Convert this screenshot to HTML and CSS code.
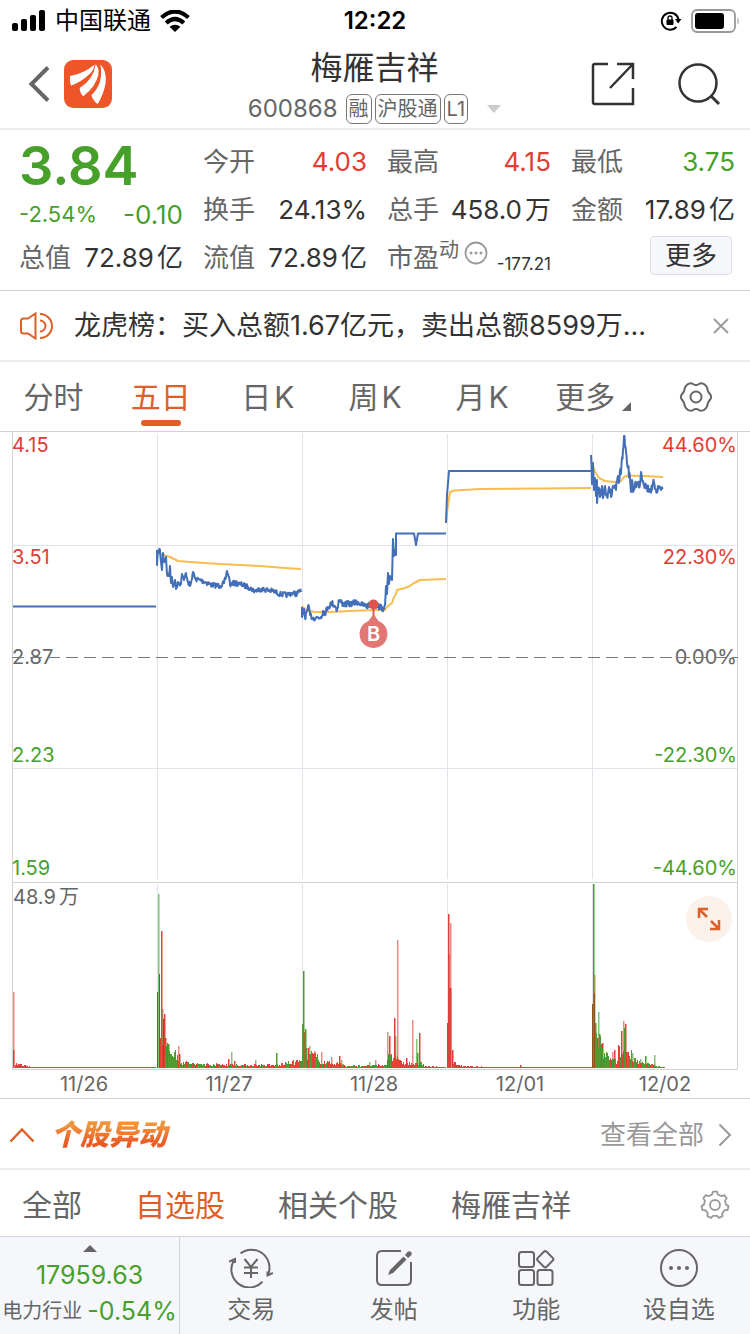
FILE: index.html
```html
<!DOCTYPE html>
<html lang="zh-CN">
<head>
<meta charset="utf-8">
<meta name="viewport" content="width=device-width, initial-scale=1">
<title>梅雁吉祥 600868</title>
<link rel="stylesheet" href="styles.css">
</head>
<body>
<div class="status">
  <div class="status-side">
    <svg class="signal" viewBox="0 0 34 22" aria-hidden="true"><rect x="0" y="13" width="6" height="8" rx="2"/><rect x="9" y="9" width="6" height="12" rx="2"/><rect x="18" y="5" width="6" height="16" rx="2"/><rect x="27" y="0" width="6" height="21" rx="2"/></svg>
    <span class="carrier">中国联通</span>
    <svg class="wifi" viewBox="0 0 30 22" aria-hidden="true"><path d="M1.500 7.500Q15-4.500 28.500 7.500M6.200 13Q15 5 23.800 13" fill="none" stroke="#000" stroke-width="4.200"/><path d="M9.500 16.800Q15 12.500 20.500 16.800L15 22z"/></svg>
  </div>
  <span class="time">12:22</span>
  <div class="status-side status-end">
    <svg class="rotation" viewBox="0 0 22 22" aria-hidden="true"><path d="M16.500 17A8.500 8.500 0 1 1 18.500 9" fill="none" stroke="#000" stroke-width="2"/><path d="M15 9h6.500L18.200 13.500z"/><rect x="6.500" y="9.500" width="7" height="5.500" rx="1"/><path d="M8 10V8a2 2 0 0 1 4 0v2" fill="none" stroke="#000" stroke-width="1.300"/></svg>
    <svg class="battery" viewBox="0 0 50 24" aria-hidden="true"><rect x="1" y="1" width="43" height="22" rx="5" fill="none" stroke="#999" stroke-width="1.800"/><rect x="4" y="4" width="29" height="16" rx="3"/><path d="M46.500 8q2.500 4 0 8z" fill="#999"/></svg>
  </div>
</div>

<header class="top">
  <div class="top-left">
    <button class="icon-btn" aria-label="返回"><svg class="back" viewBox="0 0 22 38"><path d="M20 2.500L3.500 19 20 35.500" fill="none" stroke="#666" stroke-width="4"/></svg></button>
    <svg class="logo" viewBox="0 0 144 144" aria-hidden="true"><rect width="144" height="144" rx="28" fill="#ee5529"/><g fill="#fff"><path d="M18 48Q60 40 91 14Q90 32 74 44Q54 64 21 77Q16 62 18 48z"/><path d="M95 13Q106 24 103 44Q96 78 58 109Q48 100 47 84Q88 60 95 13z"/><path d="M109 13Q129 34 125 68Q120 100 101 132Q88 124 82 106Q120 70 109 13z"/></g></svg>
  </div>
  <div class="title">
    <h1>梅雁吉祥</h1>
    <div class="subtitle"><span class="code">600868</span><span class="tag">融</span><span class="tag">沪股通</span><span class="tag">L1</span><svg class="drop" viewBox="0 0 14 8" aria-hidden="true"><path d="M0 0h14L7 8z" fill="#ccc"/></svg></div>
  </div>
  <div class="top-right">
    <button class="icon-btn" aria-label="分享"><svg class="share" viewBox="0 0 44 44"><path d="M17 2H4Q2 2 2 4V40Q2 42 4 42H42V26M26 2H42V17M42 2L19 26" fill="none" stroke="#333" stroke-width="2.500"/></svg></button>
    <button class="icon-btn" aria-label="搜索"><svg class="search" viewBox="0 0 44 44"><circle cx="21" cy="21" r="18.500" fill="none" stroke="#333" stroke-width="2.500"/><path d="M34 34l8 8" stroke="#333" stroke-width="3"/></svg></button>
  </div>
</header>

<section class="quote">
  <div class="price">
    <strong>3.84</strong>
    <div class="change"><span class="pct">-2.54%</span><span>-0.10</span></div>
  </div>
  <div class="cell"><span class="k">今开</span><span class="up">4.03</span></div>
  <div class="cell"><span class="k">最高</span><span class="up">4.15</span></div>
  <div class="cell"><span class="k">最低</span><span class="down">3.75</span></div>
  <div class="cell"><span class="k">换手</span><span>24.13%</span></div>
  <div class="cell"><span class="k">总手</span><span>458.0<span class="unit">万</span></span></div>
  <div class="cell"><span class="k">金额</span><span>17.89<span class="unit">亿</span></span></div>
  <div class="cell"><span class="k">总值</span><span>72.89<span class="unit">亿</span></span></div>
  <div class="cell"><span class="k">流值</span><span>72.89<span class="unit">亿</span></span></div>
  <div class="cell"><span class="k pe">市盈<sup>动</sup><svg class="info" viewBox="0 0 24 24" aria-hidden="true"><circle cx="12" cy="12" r="10.500" fill="none" stroke="#999" stroke-width="1.800"/><g fill="#999"><circle cx="7" cy="12" r="1.500"/><circle cx="12" cy="12" r="1.500"/><circle cx="17" cy="12" r="1.500"/></g></svg></span><span class="small">-177.21</span></div>
  <div class="cell cell-end"><button class="more">更多</button></div>
</section>

<section class="news">
  <svg class="speaker" viewBox="0 0 34 28" aria-hidden="true"><g fill="none" stroke="#dc6027" stroke-width="2"><path d="M15.500 1.500v25L8 21.500H3.500Q1 21.500 1 19V9Q1 6.500 3.500 6.500H8z"/><path d="M20 2a12 12 0 0 1 0 24M20 8.500a5.500 5.500 0 0 1 0 11"/></g></svg>
  <p>龙虎榜：买入总额1.67亿元，卖出总额8599万...</p>
  <button class="icon-btn" aria-label="关闭"><svg class="close" viewBox="0 0 16 16"><path d="M1 1l14 14M15 1L1 15" stroke="#999" stroke-width="1.800"/></svg></button>
</section>

<nav class="periods">
  <button>分时</button>
  <button class="active">五日</button>
  <button>日<span class="unit">K</span></button>
  <button>周<span class="unit">K</span></button>
  <button>月<span class="unit">K</span></button>
  <button class="period-more">更多<svg class="corner" viewBox="0 0 9 9" aria-hidden="true"><path d="M9 0v9H0z" fill="#666"/></svg></button>
  <button aria-label="图表设置"><svg class="gear" viewBox="-17 -17 34 34"><g fill="none" stroke="#666" stroke-width="2"><circle r="5.500"/><path d="M15.200 0C15.200-3 11.500-4.500 11.600-7.200Q11.500-10.500 7.600-13.200Q4.500-14.500 3-13Q0-10.800-3-13Q-4.500-14.500-7.600-13.200Q-11.500-10.500-11.600-7.200C-11.500-4.500-15.200-3-15.200 0S-11.500 4.500-11.600 7.200Q-11.500 10.500-7.600 13.200Q-4.500 14.500-3 13Q0 10.800 3 13Q4.500 14.500 7.600 13.200Q11.500 10.500 11.600 7.200C11.500 4.500 15.200 3 15.200 0z"/></g></svg></button>
</nav>

<section class="chart-wrap">
  <svg class="chart" viewBox="0 431 750 667" role="img" aria-label="五日走势图">
    <path d="M157.500 434V879M302.500 434V879M447.500 434V879M592.500 434V879M157.500 884V1068M302.500 884V1068M447.500 884V1068M592.500 884V1068M13 545.500H737M13 768.500H737" fill="none" stroke="#e2e2ea"/>
    <path d="M0 431.500H750M12.500 431V1069.500H737.500V431M12.500 882.500H737.500" fill="none" stroke="#cfd2d8"/>
    <g id="volume"></g>
    <g id="prices" fill="none" stroke-width="2" stroke-linejoin="round"></g>
    <g class="axis">
      <text class="up" x="12" y="452">4.15</text><text class="up" x="12" y="564">3.51</text><text x="12" y="664">2.87</text><text class="down" x="12" y="762">2.23</text><text class="down" x="12" y="875">1.59</text>
      <text x="13" y="904">48.9<tspan dx="3">万</tspan></text>
      <g text-anchor="end"><text class="up" x="737" y="452">44.60%</text><text class="up" x="737" y="564">22.30%</text><text x="737" y="664">0.00%</text><text class="down" x="737" y="762">-22.30%</text><text class="down" x="737" y="875">-44.60%</text></g>
      <g text-anchor="middle"><text x="84" y="1091">11/26</text><text x="229" y="1091">11/27</text><text x="374" y="1091">11/28</text><text x="520" y="1091">12/01</text><text x="665" y="1091">12/02</text></g>
    </g>
    <path d="M12 657.500H738" stroke="#777" stroke-dasharray="12 6"/>
    <path d="M373.500 605V618" stroke="#dd544e" stroke-width="2"/>
    <path d="M373.500 614L378.500 621A14 14 0 1 1 368.500 621z" fill="#e27672"/>
    <circle cx="373.500" cy="604.500" r="5" fill="#dd544e"/>
    <text class="pin" x="373.500" y="641" text-anchor="middle">B</text>
  </svg>
  <button class="expand" aria-label="全屏"><svg viewBox="0 0 24 24"><path d="M2 11V2h9M2 2l8 8M22 13v9h-9M22 22l-8-8" fill="none" stroke="#dc6027" stroke-width="2.500"/></svg></button>
</section>

<section class="moves">
  <svg class="chev-up" viewBox="0 0 26 16" aria-hidden="true"><path d="M1.500 14.500L13 2.500l11.500 12" fill="none" stroke="#dc6027" stroke-width="2.500"/></svg>
  <h2>个股异动</h2>
  <a href="#all">查看全部<svg class="chev" viewBox="0 0 14 24" aria-hidden="true"><path d="M1.500 1.500L12 12 1.500 22.500" fill="none" stroke="#999" stroke-width="2"/></svg></a>
</section>

<nav class="filters">
  <button>全部</button><button class="active">自选股</button><button>相关个股</button><button>梅雁吉祥</button>
  <button class="filter-gear" aria-label="设置"><svg class="gear-small" viewBox="-15 -15 30 30"><g fill="none" stroke="#999" stroke-width="1.800"><circle r="5"/><path id="cog"/></g></svg></button>
</nav>

<footer class="bar">
  <button class="index">
    <svg class="tri" viewBox="0 0 14 7" aria-hidden="true"><path d="M7 0l7 7H0z" fill="#666"/></svg>
    <span class="index-value">17959.63</span>
    <span class="index-row"><span class="sector">电力行业</span><span class="index-pct">-0.54%</span></span>
  </button>
  <button class="item"><svg viewBox="0 0 44 40"><g fill="none" stroke="#666" stroke-width="2"><path d="M11.500 5.400A18 18 0 0 1 39.500 25.500M33.500 33.800A18 18 0 0 1 4.500 13M0 13.500l6-2.500v4M44 25l-5.500 2.500v-4"/><path d="M15.500 11l6.500 8 6.500-8M15 19.500h14M15 25h14M22 19v11"/></g></svg><span>交易</span></button>
  <button class="item"><svg viewBox="0 0 44 40"><path d="M29 3H10Q5 3 5 8V32Q5 37 10 37H34Q39 37 39 32V14" fill="none" stroke="#666" stroke-width="2"/><path d="M16 27l2-5L31.500 8.500l3 3L21 25zM33 7l2.500-3q2-1.500 3.500 0t0 3.500L36 10z" fill="#666"/></svg><span>发帖</span></button>
  <button class="item"><svg viewBox="0 0 44 40"><g fill="none" stroke="#666" stroke-width="2"><rect x="5" y="4" width="15" height="15" rx="2.500"/><rect x="5" y="22" width="15" height="15" rx="2.500"/><rect x="23.500" y="22" width="15" height="15" rx="2.500"/><rect x="25" y="5" width="12.500" height="12.500" rx="2" transform="rotate(45 31.250 11.250)"/></g></svg><span>功能</span></button>
  <button class="item"><svg viewBox="0 0 44 40"><circle cx="22" cy="20" r="18" fill="none" stroke="#666" stroke-width="2"/><g fill="#666"><circle cx="14" cy="20" r="2"/><circle cx="22" cy="20" r="2"/><circle cx="30" cy="20" r="2"/></g></svg><span>设自选</span></button>
</footer>
<script src="chart.js"></script>
</body>
</html>
```
FILE: styles.css
```css
* { box-sizing: border-box; }
body {
  margin: 0;
  background: #fff;
  color: #333;
  font-family: Inter, "Noto Sans CJK SC", sans-serif;
  font-size: 26px;
  line-height: 36px;
}
svg { display: block; flex: none; }
h1, h2, p { margin: 0; font-weight: 400; }
button {
  padding: 0;
  border: 0;
  background: none;
  color: inherit;
  font: inherit;
  cursor: pointer;
}
a { color: inherit; text-decoration: none; }
.up { color: #e23c34; fill: #e23c34; }
.down { color: #46a02a; fill: #46a02a; }
.unit { margin-left: 3px; }

.status { display: grid; grid-template-columns: 1fr auto 1fr; align-items: center; height: 41px; padding: 0 12px; color: #000; }
.status-side { display: flex; align-items: center; gap: 9px; }
.status-end { justify-content: flex-end; gap: 9px; }
.carrier { font-size: 24px; }
.time { font-size: 24px; font-weight: 600; }
.signal { width: 34px; }
.wifi { width: 30px; }
.rotation { width: 22px; }
.battery { width: 50px; margin-right: -3px; }

.top { display: grid; grid-template-columns: 1fr auto 1fr; align-items: center; height: 89px; padding: 0 29px 2px 28px; border-bottom: 2px solid #ececec; }
.top-left { display: flex; align-items: center; gap: 14px; }
.back { width: 22px; }
.logo { width: 48px; }
.title { padding-top: 2px; text-align: center; }
.title h1 { padding-bottom: 4px; font-size: 32px; line-height: 44px; }
.subtitle { display: flex; align-items: center; justify-content: center; gap: 3px; line-height: 30px; color: #666; }
.code { margin-right: 5px; font-size: 24px; }
.tag { height: 30px; padding: 0 2px; border: 1px solid #777; border-radius: 6px; font-size: 20px; line-height: 28px; }
.drop { width: 14px; margin-left: 16px; }
.top-right { display: flex; align-items: center; justify-content: flex-end; gap: 42px; }
.share, .search { width: 44px; }

.quote { display: grid; grid-template-columns: repeat(4, 1fr); grid-auto-rows: 48px; column-gap: 20px; padding: 8px 15px 8px 19px; border-bottom: 1px solid #cfd2d8; }
.price { grid-row: span 2; color: #46a02a; }
.price strong { display: block; font-size: 54px; line-height: 56px; font-weight: 600; }
.change { display: flex; align-items: center; justify-content: space-between; font-size: 26px; line-height: 42px; }
.change .pct { font-size: 22px; line-height: 36px; padding-bottom: 2px; }
.cell { display: flex; align-items: center; justify-content: space-between; white-space: nowrap; }
.k { color: #666; }
.pe { display: flex; align-items: center; }
.pe sup { align-self: flex-start; font-size: 20px; line-height: 20px; }
.info { width: 24px; margin: 0 0 10px 5px; }
.small { align-self: flex-end; font-size: 17px; }
.cell-end { justify-content: flex-end; padding: 0 3px 6px 0; }
.more { height: 39px; padding: 0 14px; border: 1px solid #dcdfe5; border-radius: 4px; background: #f6f7fa; line-height: 37px; }

.news { display: flex; align-items: center; height: 71px; padding: 0 21px 0 20px; border-bottom: 2px solid #ececec; }
.news p { flex: 1; margin-left: 20px; overflow: hidden; white-space: nowrap; font-size: 27px; }
.speaker { width: 34px; }
.close { width: 16px; }

.periods { display: grid; grid-template-columns: repeat(7, 1fr); height: 69px; color: #666; font-size: 30px; line-height: 68px; }
.periods button { display: flex; align-items: center; justify-content: center; }
.periods .active { position: relative; color: #dc6027; }
.periods .active::after { content: ""; position: absolute; bottom: 5px; left: 50%; width: 40px; height: 6px; margin-left: -20px; border-radius: 3px; background: #dc6027; }
.period-more { padding-left: 8px; }
.corner { width: 9px; margin: 20px 0 0 7px; }
.gear { width: 34px; }

.chart-wrap { position: relative; border-bottom: 1px solid #cfd2d8; }
.chart { width: 100%; height: auto; }
.axis { fill: #666; font-size: 20px; }
.pin { fill: #fff; font-size: 20px; font-weight: 600; }
.expand { position: absolute; top: 465px; right: 18px; display: grid; place-items: center; width: 46px; height: 46px; border-radius: 50%; background: #fbf1eb; }
.expand svg { width: 24px; }

.moves { display: flex; align-items: center; height: 71px; padding: 2px 18px 0 9px; border-bottom: 2px solid #ececec; }
.chev-up { width: 26px; }
.moves h2 { margin-left: 16px; padding-right: 8px; background: linear-gradient(#f0943a 25%, #ea5c26 70%); background-clip: text; color: transparent; font-size: 29px; font-weight: 900; font-style: italic; }
.moves a { display: flex; align-items: center; gap: 14px; margin-left: auto; color: #999; }
.chev { width: 14px; }

.filters { display: flex; align-items: center; gap: 53px; height: 66px; padding: 3px 20px 0 22px; color: #666; font-size: 30px; }
.filters .active { color: #dc6027; }
.filter-gear { margin-left: auto; }
.gear-small { width: 30px; }

.bar { display: flex; height: 98px; border-top: 1px solid #cfd2d8; background: #f6f7fa; color: #666; }
.index { display: flex; flex-direction: column; align-items: center; width: 24%; padding-top: 8px; border-right: 1px solid #cfd2d8; white-space: nowrap; }
.tri { width: 14px; }
.index-value { padding-top: 6px; color: #46a02a; font-size: 25px; line-height: 35px; }
.index-row { display: flex; align-items: center; gap: 5px; line-height: 36px; }
.sector { font-size: 20px; }
.index-pct { color: #46a02a; font-size: 25px; }
.item { display: flex; flex: 1; flex-direction: column; align-items: center; padding-top: 11px; font-size: 24px; }
.item svg { width: 44px; margin-bottom: 4px; }
```
FILE: chart.js
```js
const NS = "http://www.w3.org/2000/svg";

// Small deterministic generator, so that the tick noise is stable between loads.
let seed = 7;
function rand() {
  seed = (seed * 16807) % 2147483647;
  return seed / 2147483647;
}

function addPath(parent, d, attrs) {
  const p = document.createElementNS(NS, "path");
  p.setAttribute("d", d);
  for (const k in attrs) p.setAttribute(k, attrs[k]);
  document.getElementById(parent).appendChild(p);
}

function line(points, color, noise) {
  let d = "M" + points[0].join(" ");
  for (let i = 1; i < points.length; i++) {
    const [x0, y0] = points[i - 1];
    const [x1, y1] = points[i];
    const steps = noise ? Math.max(1, Math.round((x1 - x0) / 0.5)) : 1;
    for (let s = 1; s <= steps; s++) {
      const t = s / steps;
      const j = s < steps ? (rand() - 0.5) * noise : 0;
      d += `L${(x0 + (x1 - x0) * t).toFixed(1)} ${(y0 + (y1 - y0) * t + j).toFixed(1)}`;
    }
  }
  addPath("prices", d, { stroke: color });
}

const AVG = "#f7bd50";
const PRICE = "#426fb8";

line([[157,553],[163,555],[170,557],[178,561],[190,562],[220,564],[260,566],[285,568],[301,569]], AVG, 0);
line([[302,606],[306,610],[315,612],[330,612],[350,611],[375,610],[385,610],[388,606],[392,603],[394,597],[396,594],[397,590],[405,588],[410,586],[414,583],[420,580],[446,579]], AVG, 0);
line([[446,523],[448,505],[450,492],[454,490.5],[480,489],[540,488.5],[591,488]], AVG, 0);
line([[592,463],[595,472],[599,478],[605,481],[614,482],[621,481],[624,477],[628,475.5],[645,476],[663,477]], AVG, 0);

line([[13,606.5],[156,606.5]], PRICE, 0);
line([[157,550],[157,565],[158,551],[160,550],[161,562],[162,570],[163,553],[164,562],[166,557],[167,574],[169,576],[170,566],[171,583],[172,577],[173,587],[175,580],[176,589],[178,582],[181,584],[182,574],[184,580],[186,573],[188,582],[190,586],[192,579],[193,572],[195,579]], PRICE, 5);
line([[195,579],[200,580],[205,582],[212,585],[220,586],[224,583],[226,577],[227,571],[229,577],[230,585],[232,583],[240,584],[248,587],[255,591],[260,589],[273,591],[280,594],[287,595],[292,593],[297,594],[299,591],[301,592]], PRICE, 5);
line([[302,607],[302,617],[304,609],[305,618],[307,611],[309,607],[310,615],[313,618],[321,617],[323,611],[325,613],[328,607],[332,603],[335,606],[337,610],[339,600],[343,604],[350,604],[358,602],[362,605],[368,606],[373,604],[380,607],[384,609],[385,606]], PRICE, 6);
line([[385,606],[386,586],[387,594],[388,573],[389,584],[390,576],[392,580],[393,539],[394,556],[395,550],[396,555],[396,533.5],[414,533.5],[415,539],[416,545],[418,533.5],[446,533.5]], PRICE, 0);
line([[446,523],[447,495],[449,471],[591,471]], PRICE, 0);
line([[591,455],[592,484],[593,463],[594,490],[595,478],[596,496],[597,480],[597,503],[599,488],[600,497],[602,486],[603,498],[605,486],[607,496],[609,487],[611,497],[613,486],[616,490],[618,476],[619,483],[620,470],[621,474],[623,450],[624,436],[626,452],[628,468],[630,478],[631,492],[632,480],[633,492],[635,484],[640,484],[641,472],[643,481],[647,488],[652,490],[654,482],[656,490],[660,487],[663,489]], PRICE, 9);

// Volume bars: a list of spikes over a low background.
const BASE = 1068;
const COLORS = { r: "#e0403a", R: "#ea8b87", g: "#4d9c2e", G: "#85c377", b: "#93501f" };
const paths = { r: "", R: "", g: "", G: "", b: "" };
function bar(x, h, c, w = 1) {
  paths[c] += `M${x} ${BASE}v${-h}h${w}v${h}z`;
}

function background(from, to, start, end, greenShare) {
  for (let x = from; x < to; x++) {
    const t = (x - from) / (to - from);
    const h = (start + (end - start) * t) * (0.5 + rand() * 0.8);
    bar(x, Math.max(1, Math.round(h)), rand() < greenShare ? "g" : "r");
  }
}

background(15, 30, 5, 2, 0);
background(30, 156, 1, 1, 0);
background(160, 168, 30, 18, .4);
background(168, 178, 22, 11, .8);
background(178, 196, 7, 4, .6);
background(196, 280, 4, 3, .5);
background(280, 302, 4, 8, .3);
background(306, 318, 17, 11, .7);
background(318, 345, 7, 4, .4);
background(345, 387, 2, 3, .5);
background(387, 398, 14, 14, .5);
background(398, 412, 7, 4, 0);
background(412, 424, 4, 5, .5);
background(424, 446, 2, 1, 0);
background(452, 461, 6, 3, 0);
background(461, 485, 2, 1, 0);
background(485, 592, 1, 1, 0);
background(594, 602, 34, 23, .8);
background(602, 610, 16, 11, .5);
background(610, 618, 9, 6, .6);
background(618, 628, 18, 18, .5);
background(628, 640, 18, 5, .8);
background(640, 656, 5, 3, .6);
background(656, 665, 2, 1, .7);

[[13,18,"r"],[13,76,"R"],[158,174,"G"],[157,76,"b"],[159,94,"b"],[160,30,"r"],[161,137,"r"],[162,59,"G"],[163,49,"b"],[164,54,"r"],[165,30,"r"],[168,24,"g"],[178,22,"R"],[179,14,"r"],
 [231,16,"G"],[234,7,"r"],[255,8,"G"],[276,15,"g"],[228,9,"r"],[303,97,"g"],[302,44,"g"],[304,36,"r"],[305,39,"g"],[306,20,"r"],[309,22,"G"],[314,17,"R"],[321,16,"R"],[331,11,"R"],[339,12,"r"],[341,8,"G"],[369,6,"G"],
 [375,8,"R"],[387,36,"R"],[389,32,"r"],[394,50,"r"],[395,32,"G"],[397,128,"R"],[406,10,"r"],[412,48,"R"],[416,29,"G"],[419,35,"r"],[417,15,"g"],
 [447,45,"r"],[448,154,"r"],[449,114,"R"],[450,80,"r"],[450,145,"R"],[452,18,"r"],[449,80,"r"],[520,3,"r"],
 [593,184,"g"],[592,64,"b"],[594,93,"R"],[594,75,"b"],[595,45,"g"],[597,30,"r"],[598,56,"G"],[599,34,"g"],[602,25,"r"],[612,16,"R"],[614,18,"r"],[621,37,"r"],[623,47,"R"],[624,40,"g"],[625,44,"r"],[632,15,"G"],[640,9,"G"],[645,12,"g"],[654,13,"G"]
].forEach(([x, h, c]) => bar(x, h, c, c === "b" ? 1 : 1.5));

for (const c of ["R", "G", "r", "g", "b"]) addPath("volume", paths[c], { fill: COLORS[c] });

// Seven-toothed cog outline.
const teeth = 7;
let cog = "";
for (let i = 0; i < teeth; i++) {
  [[-0.17, 13.5], [0.17, 13.5], [0.29, 11], [0.71, 11]].forEach(([a, r]) => {
    const u = -Math.PI / 2 + (i + a) * 2 * Math.PI / teeth;
    cog += `${cog ? "L" : "M"}${(r * Math.cos(u)).toFixed(1)} ${(r * Math.sin(u)).toFixed(1)}`;
  });
}
const cogPath = document.getElementById("cog");
cogPath.setAttribute("d", cog + "z");
cogPath.setAttribute("stroke-linejoin", "round");
```
